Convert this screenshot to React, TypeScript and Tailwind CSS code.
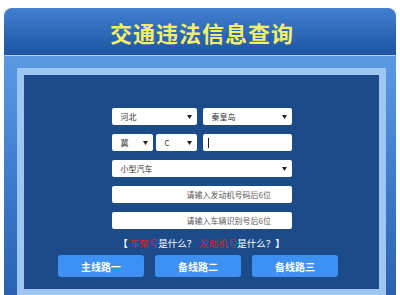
const font = { fontFamily: '"Noto Sans CJK SC", "Noto Sans", sans-serif' };

const Arrow = () => (
  <svg width="5" height="4" viewBox="0 0 5 4" className="shrink-0">
    <path d="M0 0 L5 0 L2.5 4 Z" fill="#222" />
  </svg>
);

const Select = ({ label, className = "" }: { label: string; className?: string }) => (
  <div
    className={`flex h-[17px] items-center justify-between rounded-[2px] bg-white pl-[9px] pr-[5px] text-[8px] text-[#333] ${className}`}
  >
    <span>{label}</span>
    <Arrow />
  </div>
);

const Field = ({ placeholder }: { placeholder: string }) => (
  <div className="flex h-[17px] items-center rounded-[2px] bg-white pl-[75px] text-[8px] text-[#555]">
    {placeholder}
  </div>
);

export default function App() {
  return (
    <div className="h-[295px] w-[400px] overflow-hidden bg-white px-1 pt-2" style={font}>
      <div className="w-[392px] overflow-hidden rounded-t-[8px]">
        <div className="flex h-[47px] items-center justify-center bg-gradient-to-b from-[#4280d0] to-[#1c55a0] pl-[4px]">
          <h1 className="text-[22px] font-bold leading-none tracking-[1px] text-[#f3ee6b]">交通违法信息查询</h1>
        </div>
        <div className="h-px bg-[#b3d0f2]" />
        <div className="bg-gradient-to-b from-[#5a9ae3] via-[#3d7dcc] to-[#2a62b0] pl-[13px] pr-[10px] pt-[12px]">
          <div className="border-[7px] border-[#9dc6f3] bg-[#1c4b89]">
            <div className="flex flex-col items-center pt-[33px] pb-[12px]">
              <div className="flex w-[180px] flex-col gap-[9px]">
                <div className="flex gap-[6px]">
                  <Select label="河北" className="w-[85px]" />
                  <Select label="秦皇岛" className="w-[89px]" />
                </div>
                <div className="flex gap-[6px]">
                  <div className="flex w-[85px] gap-[3px]">
                    <Select label="冀" className="w-[41px] pl-[9px]" />
                    <Select label="C" className="w-[41px] pl-[9px]" />
                  </div>
                  <div className="flex h-[17px] w-[89px] items-center rounded-[2px] bg-white pl-[5px]">
                    <div className="h-[10px] w-px bg-[#222]" />
                  </div>
                </div>
                <Select label="小型汽车" />
                <Field placeholder="请输入发动机号码后6位" />
                <Field placeholder="请输入车辆识别号后6位" />
              </div>
              <p className="mt-[8px] text-[9.5px] leading-[12px] text-white">
                <span className="font-bold">【 </span>
                <span className="text-[#d3262c]">车架号</span>是什么？
                <span className="ml-[3px] text-[#d3262c]">发动机号</span>是什么？
                <span className="font-bold">】</span>
              </p>
              <div className="mt-[6px] flex gap-[11px] pr-[7px]">
                {["主线路一", "备线路二", "备线路三"].map((t) => (
                  <button
                    key={t}
                    className="flex h-[22px] w-[86px] items-center justify-center rounded-[3px] bg-[#3d91f2] text-[10px] font-bold text-white"
                  >
                    {t}
                  </button>
                ))}
              </div>
            </div>
          </div>
        </div>
      </div>
    </div>
  );
}
